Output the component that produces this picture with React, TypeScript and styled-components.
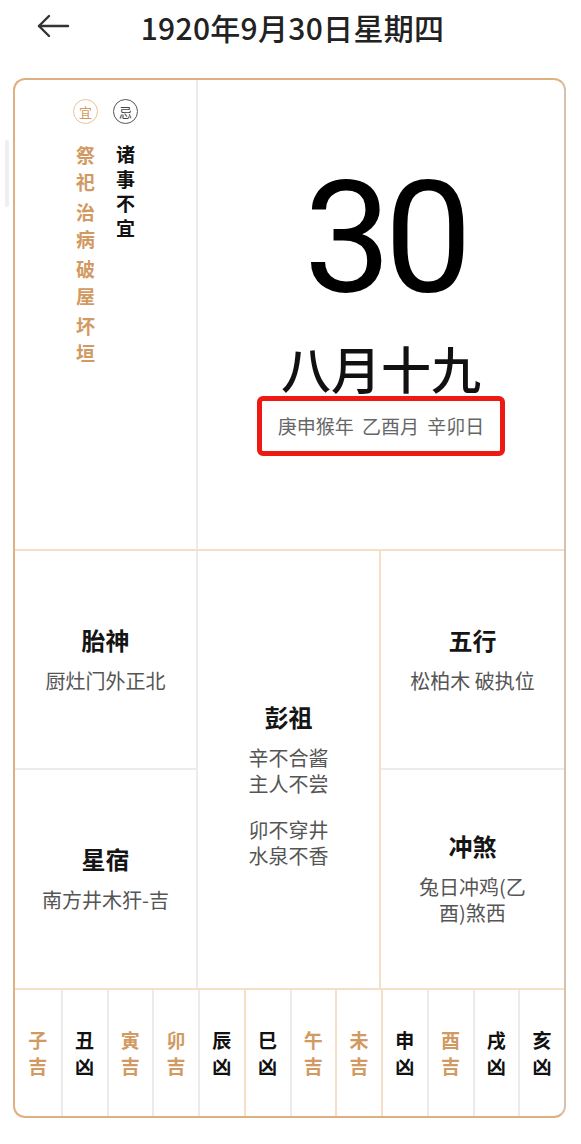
import styled, { createGlobalStyle } from "styled-components";

const GlobalStyle = createGlobalStyle`
  html, body {
    margin: 0;
    background: #fff;
    font-family: "Noto Sans CJK SC", "Noto Sans", sans-serif;
  }
`;

const GOOD = "#d29a63";
const GRID_GREY = "#ebebeb";
const GRID_WARM = "#f6dfc7";

const suitable = ["祭祀", "治病", "破屋", "坏垣"];
const avoid = ["诸事不宜"];

// 十二时辰吉凶
const hours: [string, boolean][] = [
  ["子", true],
  ["丑", false],
  ["寅", true],
  ["卯", true],
  ["辰", false],
  ["巳", false],
  ["午", true],
  ["未", true],
  ["申", false],
  ["酉", true],
  ["戌", false],
  ["亥", false],
];
const warmDividers = [5, 7, 8];

const Page = styled.div`
  position: relative;
  width: 581px;
  padding-bottom: 26px;
`;

const ScrollHint = styled.div`
  position: absolute;
  left: 5px;
  top: 140px;
  width: 4px;
  height: 67px;
  border-radius: 2px;
  background: #efefef;
`;

const Header = styled.header`
  position: relative;
  height: 54px;
  display: flex;
  align-items: center;
  justify-content: center;
`;

const BackButton = styled.button`
  position: absolute;
  left: 36px;
  top: 14px;
  padding: 0;
  border: 0;
  background: none;
  display: flex;
  color: #333;
`;

const Title = styled.h1`
  margin: 0 0 0 4px;
  font-size: 30px;
  font-weight: 500;
  color: #222;
  letter-spacing: 0.3px;
`;

const Card = styled.section`
  margin: 24px 0 0 13px;
  width: 553px;
  box-sizing: border-box;
  border: 2px solid #dfb082;
  border-right-color: #d9c0ad;
  border-radius: 12px;
  overflow: hidden;
`;

const TopSection = styled.div`
  display: grid;
  grid-template-columns: 183px 1fr;
  height: 471px;
  box-sizing: border-box;
  border-bottom: 2px solid ${GRID_WARM};
`;

const AdviceColumn = styled.div`
  box-sizing: border-box;
  border-right: 2px solid ${GRID_GREY};
  padding-top: 19px;
  display: flex;
  justify-content: center;
  gap: 14px;
`;

const AdviceList = styled.div<{ $good: boolean }>`
  width: 26px;
  display: flex;
  flex-direction: column;
  align-items: center;
  color: ${(p) => (p.$good ? GOOD : "#111")};
`;

const Badge = styled.span<{ $good: boolean }>`
  width: 23px;
  height: 23px;
  border-radius: 50%;
  border: 1.5px solid ${(p) => (p.$good ? "#e8c29c" : "#555")};
  color: ${(p) => (p.$good ? GOOD : "#444")};
  font-size: 13px;
  line-height: 23px;
  text-align: center;
  margin-bottom: 18px;
`;

const AdviceItem = styled.div<{ $good: boolean }>`
  display: flex;
  flex-direction: column;
  align-items: center;
  margin-bottom: 4px;
  font-size: 19px;
  font-weight: 600;
  line-height: ${(p) => (p.$good ? "26.5px" : "24.7px")};
`;

const DateColumn = styled.div`
  display: flex;
  flex-direction: column;
  align-items: center;
  padding-top: 80px;
`;

const DayNumber = styled.div`
  font-family: Roboto, "Liberation Sans", sans-serif;
  font-size: 156px;
  line-height: 1;
  color: #000;
  letter-spacing: -7px;
  margin-right: -7px;
`;

const LunarDate = styled.div`
  margin-top: 26px;
  font-size: 50px;
  line-height: 1;
  font-weight: 500;
  color: #111;
`;

const GanzhiBox = styled.div`
  margin-top: 4px;
  padding: 15px 16px;
  border: 5px solid #ee1a12;
  border-radius: 6px;
  font-size: 19px;
  line-height: 20px;
  color: #666;
  word-spacing: 4px;
`;

const InfoSection = styled.div`
  display: grid;
  grid-template-columns: repeat(3, 1fr);
  grid-template-rows: 1fr 1fr;
  height: 439px;
  box-sizing: border-box;
  border-bottom: 2px solid ${GRID_WARM};
`;

const InfoCell = styled.div<{ $col: number; $row: string; $right?: string; $bottom?: boolean; $tall?: boolean }>`
  box-sizing: border-box;
  grid-column: ${(p) => p.$col};
  grid-row: ${(p) => p.$row};
  display: flex;
  flex-direction: column;
  align-items: center;
  justify-content: center;
  text-align: center;
  border-right: ${(p) => (p.$right ? `2px solid ${p.$right}` : "none")};
  border-bottom: ${(p) => (p.$bottom ? `2px solid ${GRID_GREY}` : "none")};
  padding: ${(p) => (p.$tall ? "32px 16px 0" : "0 16px")};
`;

const InfoTitle = styled.div`
  font-size: 24px;
  line-height: 30px;
  font-weight: 700;
  color: #151515;
  margin-bottom: 13px;
`;

const InfoText = styled.div<{ $gap?: boolean }>`
  font-size: 20px;
  line-height: 26.5px;
  color: #555;
  margin-top: ${(p) => (p.$gap ? "19px" : "0")};
`;

const HourRow = styled.div`
  display: grid;
  grid-template-columns: repeat(12, 1fr);
  height: 126px;
`;

const HourCell = styled.div<{ $good: boolean; $divider?: string }>`
  box-sizing: border-box;
  display: flex;
  flex-direction: column;
  align-items: center;
  justify-content: center;
  border-left: ${(p) => (p.$divider ? `2px solid ${p.$divider}` : "none")};
  font-size: 19px;
  line-height: 26px;
  font-weight: ${(p) => (p.$good ? 600 : 700)};
  color: ${(p) => (p.$good ? GOOD : "#111")};
`;

function BackArrow() {
  return (
    <svg width="34" height="24" viewBox="0 0 34 24" fill="none" stroke="currentColor" strokeWidth="2.4" strokeLinecap="round" strokeLinejoin="round">
      <path d="M3 12h29" />
      <path d="M13 2L3 12l10 10" />
    </svg>
  );
}

function Advice({ good, items }: { good: boolean; items: string[] }) {
  return (
    <AdviceList $good={good}>
      <Badge $good={good}>{good ? "宜" : "忌"}</Badge>
      {items.map((item) => (
        <AdviceItem key={item} $good={good}>
          {item.split("").map((ch, i) => (
            <span key={i}>{ch}</span>
          ))}
        </AdviceItem>
      ))}
    </AdviceList>
  );
}

export default function App() {
  return (
    <Page>
      <GlobalStyle />
      <ScrollHint />
      <Header>
        <BackButton aria-label="返回">
          <BackArrow />
        </BackButton>
        <Title>1920年9月30日星期四</Title>
      </Header>

      <Card>
        <TopSection>
          <AdviceColumn>
            <Advice good items={suitable} />
            <Advice good={false} items={avoid} />
          </AdviceColumn>
          <DateColumn>
            <DayNumber>30</DayNumber>
            <LunarDate>八月十九</LunarDate>
            <GanzhiBox>庚申猴年 乙酉月 辛卯日</GanzhiBox>
          </DateColumn>
        </TopSection>

        <InfoSection>
          <InfoCell $col={1} $row="1" $right={GRID_GREY} $bottom>
            <InfoTitle>胎神</InfoTitle>
            <InfoText>厨灶门外正北</InfoText>
          </InfoCell>
          <InfoCell $col={2} $row="1 / 3" $right={GRID_WARM} $tall>
            <InfoTitle>彭祖</InfoTitle>
            <InfoText>
              辛不合酱
              <br />
              主人不尝
            </InfoText>
            <InfoText $gap>
              卯不穿井
              <br />
              水泉不香
            </InfoText>
          </InfoCell>
          <InfoCell $col={3} $row="1" $bottom>
            <InfoTitle>五行</InfoTitle>
            <InfoText>松柏木 破执位</InfoText>
          </InfoCell>
          <InfoCell $col={1} $row="2" $right={GRID_GREY}>
            <InfoTitle>星宿</InfoTitle>
            <InfoText>南方井木犴-吉</InfoText>
          </InfoCell>
          <InfoCell $col={3} $row="2">
            <InfoTitle>冲煞</InfoTitle>
            <InfoText>
              兔日冲鸡(乙
              <br />
              酉)煞西
            </InfoText>
          </InfoCell>
        </InfoSection>

        <HourRow>
          {hours.map(([name, good], i) => (
            <HourCell
              key={name}
              $good={good}
              $divider={i === 0 ? undefined : warmDividers.includes(i) ? GRID_WARM : GRID_GREY}
            >
              <span>{name}</span>
              <span>{good ? "吉" : "凶"}</span>
            </HourCell>
          ))}
        </HourRow>
      </Card>
    </Page>
  );
}
